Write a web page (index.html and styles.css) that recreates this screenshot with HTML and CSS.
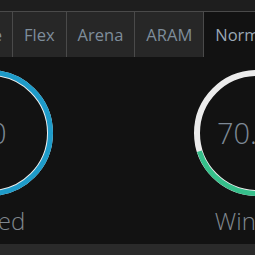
FILE: index.html
```html
<!DOCTYPE html>
<html lang="en">
<head>
    <meta charset="UTF-8">
    <meta name="viewport" content="width=device-width, initial-scale=1.0">
    <title>Stats</title>
    <link rel="stylesheet" href="styles.css">
</head>
<body>
    <div class="page">
        <div class="tabs">
            <div class="tab first">Single</div>
            <div class="tab">Flex</div>
            <div class="tab">Arena</div>
            <div class="tab">ARAM</div>
            <div class="tab active">Normal</div>
        </div>

        <div class="stats">
            <div class="stat">
                <div class="donut">
                    <svg width="126" height="126" viewBox="0 0 126 126">
                        <circle class="track" cx="63" cy="63" r="60"></circle>
                        <circle class="arc blue" cx="63" cy="63" r="60.5" stroke-dasharray="380.1 380.1"></circle>
                    </svg>
                    <span class="value">20</span>
                </div>
                <div class="label">Played</div>
            </div>
            <div class="stat">
                <div class="donut">
                    <svg width="126" height="126" viewBox="0 0 126 126">
                        <circle class="track" cx="63" cy="63" r="60"></circle>
                        <circle class="arc green" cx="63" cy="63" r="60.5" stroke-dasharray="266 380.1"></circle>
                    </svg>
                    <span class="value">70.6%</span>
                </div>
                <div class="label">Winrate</div>
            </div>
        </div>

        <div class="footer"></div>
    </div>
</body>
</html>
```

FILE: styles.css
```css
body {
    margin: 0;
    padding: 0;
    background-color: #121212;
    font-family: "Open Sans", sans-serif;
    overflow: hidden;
}

.page {
    width: 255px;
    height: 255px;
    display: flex;
    flex-direction: column;
    overflow: hidden;
}

.tabs {
    display: flex;
    background-color: #1e1e1e;
    padding-top: 11px;
    margin-left: -89px;
}

.tab {
    flex-shrink: 0;
    height: 45px;
    line-height: 45px;
    padding: 0 11px;
    background-color: #272727;
    border-top: 1px solid #4a4a4a;
    border-right: 1px solid #4a4a4a;
    color: #7e8d9b;
    font-size: 16.5px;
    white-space: nowrap;
}

.tab.first {
    width: 80px;
    padding-right: 10px;
    text-align: right;
}

.tab.active {
    background-color: #121212;
    color: #9aa8b5;
    border-right: none;
}

.stats {
    flex: 1;
    display: flex;
    gap: 141px;
    margin-left: -73px;
    padding-top: 13px;
}

.stat {
    flex-shrink: 0;
    width: 126px;
    display: flex;
    flex-direction: column;
    align-items: center;
}

.donut {
    position: relative;
    width: 126px;
    height: 126px;
}

.donut svg {
    display: block;
    transform: rotate(-90deg);
}

.track {
    fill: none;
    stroke: #ececec;
    stroke-width: 6;
}

.arc {
    fill: none;
    stroke-width: 5;
}

.arc.blue {
    stroke: #1e9bc9;
}

.arc.green {
    stroke: #36bf8b;
}

.value {
    position: absolute;
    top: 0;
    left: -20px;
    right: -20px;
    line-height: 126px;
    text-align: center;
    font-size: 29px;
    font-weight: 300;
    color: #7d8996;
    white-space: nowrap;
}

.label {
    margin-top: 8px;
    font-size: 24px;
    font-weight: 300;
    color: #80878e;
    white-space: nowrap;
}

.footer {
    height: 11px;
    background-color: #2a2a2a;
}
```
